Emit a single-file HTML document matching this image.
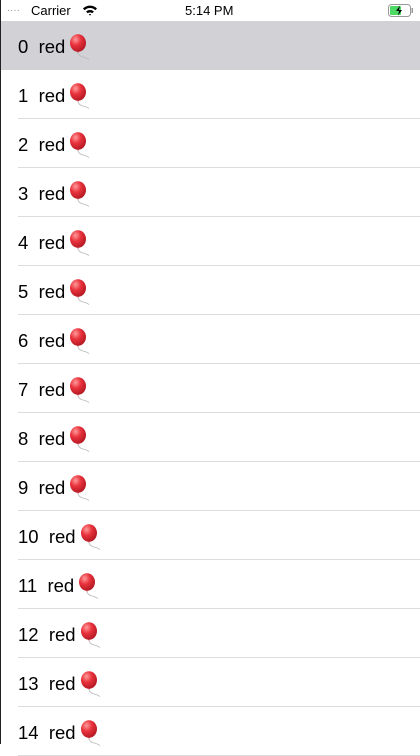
<!DOCTYPE html>
<html><head><style>
body{margin:0;width:420px;height:744px;overflow:hidden;background:#fff;font-family:"Liberation Sans",sans-serif;position:relative}
.edge{position:absolute;left:0;top:0;width:1px;height:744px;background:#222;z-index:5}
.sb{position:absolute;top:0;left:0;width:420px;height:21px;background:#fff;font-size:13px;color:#000}
.row{position:absolute;left:0;width:420px;height:49px;font-size:18.5px;color:#000}
.row .t{position:absolute;left:18px;top:13px;white-space:pre}
.row .sep{position:absolute;left:18px;right:0;bottom:0;height:1px;background:#dcdcdc}
.sel{background:#d1d1d6}
.b{display:inline-block;width:21px;height:26px;vertical-align:-7px;margin-left:4px}
</style></head><body>
<svg width="0" height="0" style="position:absolute"><defs><radialGradient id="g" cx="0.35" cy="0.3" r="0.75"><stop offset="0" stop-color="#ff9a9a"/><stop offset="0.45" stop-color="#e8323c"/><stop offset="1" stop-color="#b01822"/></radialGradient></defs></svg>
<div class="edge"></div>
<div class="sb">
<span style="position:absolute;left:7px;top:3px;letter-spacing:0.5px;color:#999;font-size:10px">....</span>
<span style="position:absolute;left:31px;top:3px">Carrier</span>
<svg style="position:absolute;left:82px;top:4px" width="16" height="12" viewBox="0 0 16 12"><path d="M1 4.5A10 10 0 0 1 15 4.5L13.3 6.2A7.6 7.6 0 0 0 2.7 6.2Z M4.1 7.6A5.6 5.6 0 0 1 11.9 7.6L10.2 9.3A3.2 3.2 0 0 0 5.8 9.3Z M6.9 10.4A1.6 1.6 0 0 1 9.1 10.4L8 11.6Z" fill="#000"/></svg>
<span style="position:absolute;left:185px;top:3px">5:14 PM</span>
<svg style="position:absolute;left:388px;top:4px" width="26" height="13" viewBox="0 0 26 13"><rect x="0.5" y="0.5" width="22" height="12" rx="3" fill="none" stroke="#999"/><rect x="2" y="2" width="11" height="9" rx="1" fill="#4cd964"/><rect x="23.5" y="4" width="1.5" height="5" fill="#999"/><path d="M12 1.5L8 7h3l-1 4.5L14 6h-3z" fill="#000"/></svg>
</div>
<div id="rows"></div>
<script>
var h='';
var bal='<svg class="b" viewBox="0 0 21 26"><ellipse cx="9" cy="9" rx="8" ry="8.8" fill="url(#g)"/><path d="M8.3 17.6 L9.7 17.6 L9 19Z" fill="#b01822"/><path d="M9 19 Q10 22 14 23 Q18 24 20 25.5" stroke="#bbb" stroke-width="0.9" fill="none"/></svg>';
for(var i=0;i<15;i++){
h+='<div class="row'+(i==0?' sel':'')+'" style="top:'+(21+49*i)+'px"><span class="t">'+i+'  red'+bal+'</span>'+(i==0?'':'<div class="sep"></div>')+'</div>';
}
document.getElementById('rows').innerHTML=h;
</script>
</body></html>
